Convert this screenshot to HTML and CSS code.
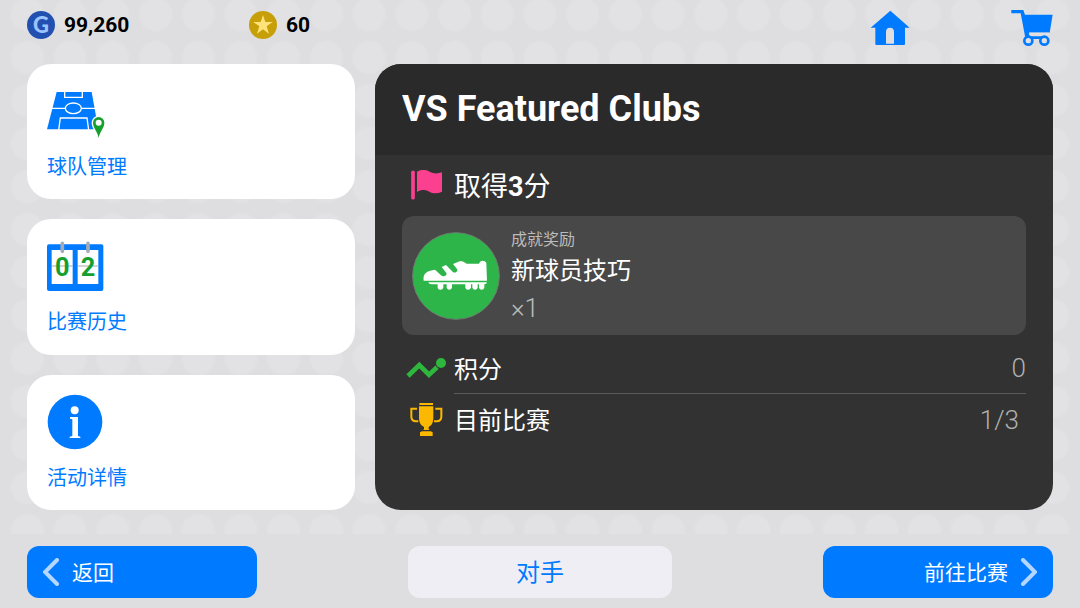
FILE: index.html
```html
<!DOCTYPE html>
<html lang="zh-CN">
<head>
    <meta charset="UTF-8">
    <meta name="viewport" content="width=device-width, initial-scale=1.0">
    <title>VS Featured Clubs</title>
    <link rel="stylesheet" href="styles.css">
</head>
<body>
    <div class="dots"></div>
    <div class="page">
        <header class="top-bar">
            <div class="currency">
                <svg class="coin" viewBox="0 0 28 28">
                    <circle cx="14" cy="14" r="14" fill="#2250b0"/>
                    <text x="14" y="22" class="coin-letter">G</text>
                </svg>
                <span>99,260</span>
            </div>
            <div class="currency">
                <svg class="coin" viewBox="0 0 84 84">
                    <circle cx="42" cy="42" r="42" fill="#c79f09"/>
                    <path d="M42 12l7 21h22L53 46l7 22-18-13-18 13 7-22-18-13h22z" fill="#ffe27a"/>
                </svg>
                <span>60</span>
            </div>
            <nav class="top-links">
                <a href="#home" aria-label="主页">
                    <svg width="40" height="36" viewBox="90 27 120 108">
                        <path fill="#007aff" fill-rule="evenodd" d="M151 29l58 51h-14v49q0 3-3 3h-83q-3 0-3-3V80H92zM138 128h24V93q0-13-12-13t-12 13z"/>
                    </svg>
                </a>
                <a href="#shop" aria-label="商店">
                    <svg width="43" height="38" viewBox="515 27 129 114">
                        <path fill="#007aff" d="M516 30h36l5 14h83l-9 54h-61l1 11h50v8h-54l-9-4-14-73h-28z"/>
                        <path d="M569 101h61" stroke="#e0e0e2" stroke-width="7"/>
                        <circle cx="567" cy="122" r="12" fill="#e0e0e2" stroke="#007aff" stroke-width="8"/>
                        <circle cx="615" cy="122" r="12" fill="#e0e0e2" stroke="#007aff" stroke-width="8"/>
                    </svg>
                </a>
            </nav>
        </header>

        <main class="content">
            <div class="menu">
                <button class="card">
                    <svg class="card-icon" viewBox="51 3 180 180">
                        <path d="M80 36h105l20 112H51z" fill="#007aff"/>
                        <g fill="none" stroke="#fff" stroke-width="4">
                            <path d="M104 34v18h53V34M66 85h41M154 85h42M86 150l5-36h80l5 36"/>
                            <ellipse cx="130" cy="85" rx="24" ry="16"/>
                        </g>
                        <path d="M206 179c-5-22-21-32-21-51a21 21 0 0 1 42 0c0 19-16 29-21 51z" fill="#fff"/>
                        <path d="M206 174c-3-20-17-30-17-46a17 17 0 0 1 34 0c0 16-14 26-17 46z" fill="#15a02d"/>
                        <circle cx="206" cy="128" r="9" fill="#fff"/>
                    </svg>
                    <span>球队管理</span>
                </button>
                <button class="card">
                    <svg class="card-icon" viewBox="51 3 180 180">
                        <rect x="51" y="28" width="169" height="140" rx="6" fill="#007aff"/>
                        <path d="M65 45h63v102H65zM143 45h62v102h-62z" fill="#fff"/>
                        <path d="M65 93h63M143 93h62" stroke="#aaa" stroke-width="3"/>
                        <path d="M97 25v24M174 25v24" stroke="#a5abb5" stroke-width="11" stroke-linecap="round"/>
                        <text x="97" y="123" class="flip-digit">0</text>
                        <text x="174" y="123" class="flip-digit">2</text>
                    </svg>
                    <span>比赛历史</span>
                </button>
                <button class="card">
                    <svg class="card-icon" viewBox="0 0 180 180">
                        <circle cx="84" cy="90" r="82" fill="#007aff"/>
                        <circle cx="83" cy="55" r="12" fill="#fff"/>
                        <path d="M69 75h24v57l7 2v4H68v-4l8-2V82l-7-2z" fill="#fff"/>
                    </svg>
                    <span>活动详情</span>
                </button>
            </div>

            <section class="panel">
                <h1>VS Featured Clubs</h1>
                <div class="panel-body">
                    <h2 class="goal">
                        <svg width="52" height="30" viewBox="0 0 156 90">
                            <path d="M33 7v76" stroke="#fb4090" stroke-width="11" stroke-linecap="round"/>
                            <path d="M45 5c14-8 27-6 38 0s24 7 37 2v58c-13 6-27 6-38 0s-24-7-37 1z" fill="#fb4090"/>
                        </svg>
                        <span>取得<b>3</b>分</span>
                    </h2>
                    <div class="reward">
                        <svg class="reward-icon" viewBox="68 213 264 264">
                            <circle cx="200" cy="345" r="130" fill="#2db54a" stroke="#6c816f" stroke-width="3"/>
                            <path fill="#fff" d="M103 359c-3-23 9-29 34-33l18 17q6 5 13 1 6-3 3-8l-14-18 13-6 20 20q5 5 11 1t2-9l-12-15 22-9q10 0 19 8h37q3-9 11-9t11 7l2 53z"/>
                            <path fill="#fff" d="M105 364h188q-1 6-8 6v10q-2 6-8 6t-8-6v-10h-4v10q-2 6-8 6t-8-6v-10h-4v10q-2 6-9 6t-8-6v-10h-40v10q-2 6-8 6t-8-6v-10h-10v10q-2 6-9 6t-8-6v-10h-18q-9 0-10-6z"/>
                        </svg>
                        <div class="reward-text">
                            <span class="reward-type">成就奖励</span>
                            <span class="reward-name">新球员技巧</span>
                            <span class="reward-count">×1</span>
                        </div>
                    </div>
                    <div class="stat">
                        <svg width="52" height="36" viewBox="0 0 156 108">
                            <path d="M18 75l34-33 29 29 24-22" fill="none" stroke="#2db83d" stroke-width="14"/>
                            <circle cx="117" cy="36" r="15" fill="#2db83d"/>
                        </svg>
                        <div class="stat-line">
                            <span>积分</span>
                            <span class="stat-value">0</span>
                        </div>
                    </div>
                    <div class="stat">
                        <svg width="52" height="36" viewBox="0 0 156 108">
                            <path d="M52 3h41v6H52zM51 13h43v36q0 19-14 26v6q3 6 12 10v11H54V91q9-4 12-10v-6q-15-7-15-26z" fill="#fbb800"/>
                            <path d="M45 20H28v24q0 13 14 14h7M100 20h18v24q0 13-14 14h-8" fill="none" stroke="#fbb800" stroke-width="6"/>
                            <path d="M55 86h37" stroke="#323232" stroke-width="4"/>
                        </svg>
                        <div class="stat-line">
                            <span>目前比赛</span>
                            <span class="stat-value inset">1/3</span>
                        </div>
                    </div>
                </div>
            </section>
        </main>

        <footer class="bottom-bar">
            <button class="btn btn-back">
                <svg width="16" height="28" viewBox="0 0 16 28"><path d="M14 2L2 14l12 12"/></svg>
                <span>返回</span>
            </button>
            <button class="btn btn-rival"><span>对手</span></button>
            <button class="btn btn-next">
                <span>前往比赛</span>
                <svg width="16" height="28" viewBox="0 0 16 28"><path d="M2 2l12 12L2 26"/></svg>
            </button>
        </footer>
    </div>
</body>
</html>
```
FILE: styles.css
```css
* {
    box-sizing: border-box;
}
body {
    margin: 0;
    background: #dedee1;
    font-family: Roboto, "Noto Sans CJK SC", sans-serif;
}
button {
    border: 0;
    font-family: inherit;
    cursor: pointer;
}
svg {
    display: block;
    flex: none;
}
h1, h2 {
    margin: 0;
}

/* faint dot pattern, stops above the bottom buttons */
.dots {
    position: absolute;
    inset: 0 6px 74px;
    background-image: radial-gradient(circle, #e2e2e4 15px, transparent 18px);
    background-size: 43px 43px;
    background-repeat: round repeat;
    background-position: left bottom -18px;
}
.page {
    position: relative;
    display: flex;
    flex-direction: column;
    min-height: 100vh;
    padding: 0 27px 10px;
}

.top-bar {
    display: flex;
    align-items: center;
    height: 50px;
    margin-bottom: 14px;
}
.currency {
    display: flex;
    align-items: center;
    gap: 9px;
    width: 222px;
    font-size: 21px;
    font-weight: bold;
    color: #000;
}
.coin {
    width: 28px;
    height: 28px;
}
.coin-letter {
    font: 900 22px Lato, sans-serif;
    fill: #9cc3ff;
    text-anchor: middle;
}
.top-links {
    display: flex;
    align-items: center;
    gap: 101px;
    margin-left: auto;
    margin-right: -1px;
    padding-top: 5px;
}

.content {
    flex: 1;
    display: grid;
    grid-template-columns: 328fr 678fr;
    gap: 20px;
}
.menu {
    display: grid;
    grid-auto-rows: 1fr;
    gap: 20px;
}
.card {
    display: flex;
    flex-direction: column;
    align-items: flex-start;
    gap: 10px;
    padding: 17px 20px 14px;
    border-radius: 24px;
    background: #fff;
    color: #007aff;
    font-size: 20px;
    line-height: 32px;
}
.card-icon {
    width: 60px;
    height: 60px;
}
.flip-digit {
    font: bold 76px Roboto, sans-serif;
    fill: #15a02d;
    text-anchor: middle;
}

.panel {
    overflow: hidden;
    border-radius: 26px;
    background: #323232;
    color: #fff;
}
.panel h1 {
    padding: 0 27px;
    background: #2a2a2a;
    font-size: 36px;
    line-height: 91px;
}
.panel-body {
    padding: 0 27px;
}
.goal {
    display: flex;
    align-items: center;
    height: 61px;
    padding-bottom: 2px;
    font-size: 27px;
    font-weight: normal;
}
.reward {
    display: flex;
    align-items: center;
    gap: 11px;
    height: 119px;
    margin-bottom: 8px;
    padding: 0 10px;
    border-radius: 12px;
    background: #484848;
}
.reward-icon {
    width: 88px;
    height: 88px;
}
.reward-text {
    display: flex;
    flex-direction: column;
    padding-top: 2px;
}
.reward-type {
    font-size: 16px;
    line-height: 24px;
    color: #bbb;
}
.reward-name {
    font-size: 24px;
    line-height: 38px;
}
.reward-count {
    font-size: 26px;
    line-height: 36px;
    font-weight: 300;
    color: #bbb;
}
.stat {
    display: flex;
    align-items: center;
}
.stat-line {
    flex: 1;
    display: flex;
    align-items: center;
    justify-content: space-between;
    height: 51px;
    padding-bottom: 2px;
    border-bottom: 1px solid #5a5a5a;
    font-size: 24px;
}
.stat:last-child .stat-line {
    border-bottom: 0;
}
.stat-value {
    padding-top: 2px;
    font-size: 26px;
    font-weight: 300;
    color: #b0b0b0;
}
.inset {
    padding-right: 7px;
}

.bottom-bar {
    display: grid;
    grid-template-columns: 230fr 264fr 230fr;
    column-gap: 151px;
    margin-top: 36px;
}
.btn {
    display: flex;
    align-items: center;
    gap: 13px;
    height: 52px;
    padding: 0 16px;
    border-radius: 12px;
    background: #007aff;
    color: #fff;
    font-size: 21px;
}
.btn span {
    padding-bottom: 3px;
}
.btn path {
    fill: none;
    stroke: #b5d7ff;
    stroke-width: 4;
    stroke-linecap: round;
}
.btn-rival {
    justify-content: center;
    background: #eeeef4;
    color: #007aff;
    font-size: 24px;
}
.btn-next {
    justify-content: flex-end;
}
```
